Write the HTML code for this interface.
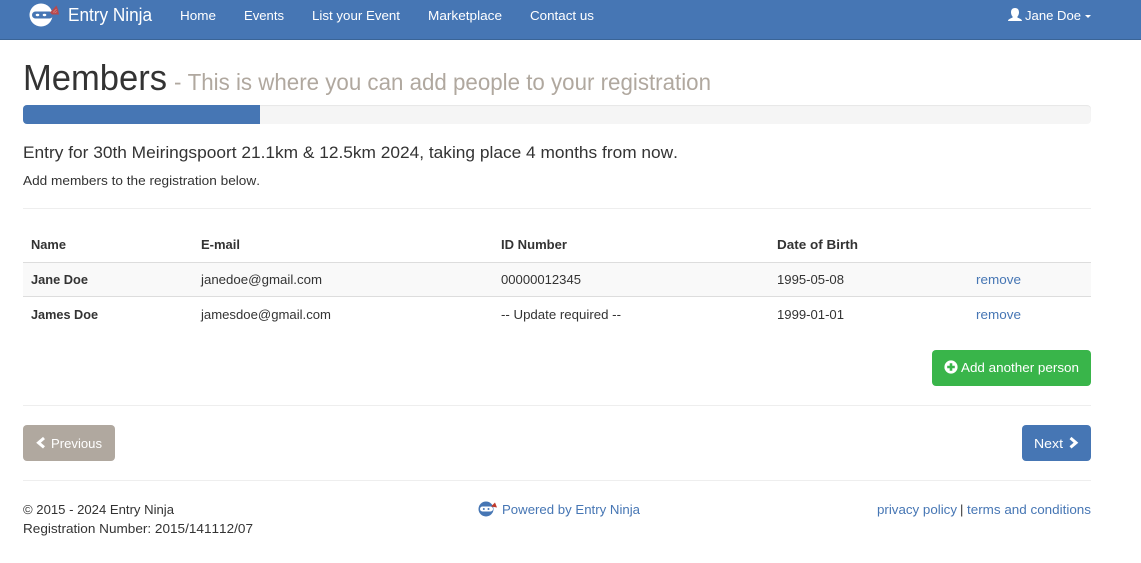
<!DOCTYPE html>
<html lang="en">
<head>
<meta charset="utf-8">
<title>Entry Ninja - Members</title>
<style>
html,body{margin:0;padding:0;background:#fff;}
body{width:1141px;height:563px;position:relative;overflow:hidden;font-family:"Liberation Sans",sans-serif;}
.b{position:absolute;box-sizing:border-box;}
.nav{left:0;top:0;width:1141px;height:40px;background:#4676b4;border-bottom:1px solid #3a6496;}
.hr{left:23px;width:1068px;height:1px;background:#eee;}
.track{left:23px;top:105px;width:1068px;height:19px;background:#f5f5f5;border-radius:4px;box-shadow:inset 0 1px 1px rgba(0,0,0,.06);overflow:hidden;}
.bar{left:0;top:0;width:237px;height:19px;background:#4676b4;}
.btn{border-radius:4px;height:36px;top:425px;}
svg.txt{position:absolute;left:0;top:0;}
text{font-family:"Liberation Sans",sans-serif;font-size:13px;fill:#333;font-kerning:none;}
.w{fill:#fff;}
.l{fill:#4676b4;}
.s{font-weight:bold;}
</style>
</head>
<body>
<div class="b nav"></div>
<div class="b hr" style="top:208px"></div>
<div class="b track"><div class="b bar"></div></div>
<div class="b" style="left:23px;top:262px;width:1068px;height:35px;background:#f9f9f9;border-top:1px solid #ddd;border-bottom:1px solid #ddd;"></div>
<div class="b btn" style="left:932px;top:350px;width:159px;background:#39b54a;"></div>
<div class="b hr" style="top:405px"></div>
<div class="b btn" style="left:23px;width:92px;background:#b0a89f;"></div>
<div class="b btn" style="left:1022px;width:69px;background:#4676b4;"></div>
<div class="b hr" style="top:480px"></div>

<svg class="txt" width="1141" height="563" viewBox="0 0 1141 563">
  <!-- logo -->
  <circle cx="41" cy="15" r="11.5" fill="#fff"/>
  <rect x="32" y="11.5" width="21" height="7" rx="3.5" fill="#4676b4"/>
  <ellipse cx="37.5" cy="15" rx="1.8" ry="1.2" fill="#fff"/>
  <ellipse cx="44.5" cy="15" rx="1.8" ry="1.2" fill="#fff"/>
  <path d="M50 12.5 L56.5 5.5 L58 9.5 L59 14.5 L52 14.5 Z" fill="#b8484c"/>
  <path d="M53 12.5 L56.5 9 M54.5 13 L57 11.5" stroke="#d98b8c" stroke-width=".7"/>
  <text class="w" x="68" y="21" style="font-size:18px" textLength="84" lengthAdjust="spacingAndGlyphs">Entry Ninja</text>
  <text class="w" x="180" y="20" textLength="36" lengthAdjust="spacingAndGlyphs">Home</text>
  <text class="w" x="244" y="20" textLength="40" lengthAdjust="spacingAndGlyphs">Events</text>
  <text class="w" x="312" y="20" textLength="88" lengthAdjust="spacingAndGlyphs">List your Event</text>
  <text class="w" x="428" y="20" textLength="74" lengthAdjust="spacingAndGlyphs">Marketplace</text>
  <text class="w" x="530" y="20" textLength="64" lengthAdjust="spacingAndGlyphs">Contact us</text>
  <!-- user icon -->
  <path d="M1015 8 C1018 8 1019 10 1019 12.5 C1019 14.5 1018 16 1017.3 16.8 L1017.5 17.6 C1019 18.3 1022 19 1022 21 L1008 21 C1008 19 1011 18.3 1012.5 17.6 L1012.7 16.8 C1012 16 1011 14.5 1011 12.5 C1011 10 1012 8 1015 8 Z" fill="#fff"/>
  <text class="w" x="1025" y="20" textLength="56" lengthAdjust="spacingAndGlyphs">Jane Doe</text>
  <path d="M1085 15 L1091 15 L1088 18 Z" fill="#fff"/>

  <text x="23" y="90" style="font-size:36px" textLength="144" lengthAdjust="spacingAndGlyphs">Members</text>
  <text x="174" y="90" style="font-size:23.4px;fill:#b0a89f" textLength="537" lengthAdjust="spacingAndGlyphs">- This is where you can add people to your registration</text>
  <text x="23" y="158" style="font-size:16.9px" textLength="655" lengthAdjust="spacingAndGlyphs">Entry for 30th Meiringspoort 21.1km &amp; 12.5km 2024, taking place 4 months from now.</text>
  <text x="23" y="185" textLength="237" lengthAdjust="spacingAndGlyphs">Add members to the registration below.</text>

  <text class="s" x="31" y="249" textLength="35" lengthAdjust="spacingAndGlyphs">Name</text>
  <text class="s" x="201" y="249" textLength="39" lengthAdjust="spacingAndGlyphs">E-mail</text>
  <text class="s" x="501" y="249" textLength="66" lengthAdjust="spacingAndGlyphs">ID Number</text>
  <text class="s" x="777" y="249" textLength="81" lengthAdjust="spacingAndGlyphs">Date of Birth</text>

  <text class="s" x="31" y="284" textLength="57" lengthAdjust="spacingAndGlyphs">Jane Doe</text>
  <text x="201" y="284" textLength="121" lengthAdjust="spacingAndGlyphs">janedoe@gmail.com</text>
  <text x="501" y="284" textLength="80" lengthAdjust="spacingAndGlyphs">00000012345</text>
  <text x="777" y="284" textLength="67" lengthAdjust="spacingAndGlyphs">1995-05-08</text>
  <text class="l" x="976" y="284" textLength="45" lengthAdjust="spacingAndGlyphs">remove</text>

  <text class="s" x="31" y="319" textLength="67" lengthAdjust="spacingAndGlyphs">James Doe</text>
  <text x="201" y="319" textLength="130" lengthAdjust="spacingAndGlyphs">jamesdoe@gmail.com</text>
  <text x="501" y="319" textLength="120" lengthAdjust="spacingAndGlyphs">-- Update required --</text>
  <text x="777" y="319" textLength="67" lengthAdjust="spacingAndGlyphs">1999-01-01</text>
  <text class="l" x="976" y="319" textLength="45" lengthAdjust="spacingAndGlyphs">remove</text>

  <!-- add -->
  <circle cx="951" cy="367" r="6.6" fill="#fff"/>
  <path d="M951 363.2 V370.8 M947.2 367 H954.8" stroke="#39b54a" stroke-width="2.6"/>
  <text class="w" x="961" y="372" textLength="118" lengthAdjust="spacingAndGlyphs">Add another person</text>

  <!-- previous -->
  <path d="M44 438 L38.5 442.7 L44 447.4" fill="none" stroke="#fff" stroke-width="3"/>
  <text class="w" x="51" y="448" textLength="51" lengthAdjust="spacingAndGlyphs">Previous</text>
  <!-- next -->
  <text class="w" x="1034" y="448" textLength="29" lengthAdjust="spacingAndGlyphs">Next</text>
  <path d="M1070.5 438 L1076 442.7 L1070.5 447.4" fill="none" stroke="#fff" stroke-width="3"/>

  <!-- footer -->
  <text x="23" y="514" textLength="151" lengthAdjust="spacingAndGlyphs">© 2015 - 2024 Entry Ninja</text>
  <text x="23" y="533" textLength="230" lengthAdjust="spacingAndGlyphs">Registration Number: 2015/141112/07</text>
  <circle cx="486" cy="509" r="7.5" fill="#4676b4"/>
  <rect x="480" y="506.5" width="13" height="5" rx="2.5" fill="#fff"/>
  <circle cx="483.8" cy="509" r="1" fill="#4676b4"/>
  <circle cx="488.5" cy="509" r="1" fill="#4676b4"/>
  <path d="M491 506.5 L495 502.5 L497 507.5 Z" fill="#c0392b"/>
  <text class="l" x="502" y="514" textLength="138" lengthAdjust="spacingAndGlyphs">Powered by Entry Ninja</text>
  <text class="l" x="877" y="514" textLength="80" lengthAdjust="spacingAndGlyphs">privacy policy</text>
  <text x="960" y="514">|</text>
  <text class="l" x="967" y="514" textLength="124" lengthAdjust="spacingAndGlyphs">terms and conditions</text>
</svg>
</body>
</html>
